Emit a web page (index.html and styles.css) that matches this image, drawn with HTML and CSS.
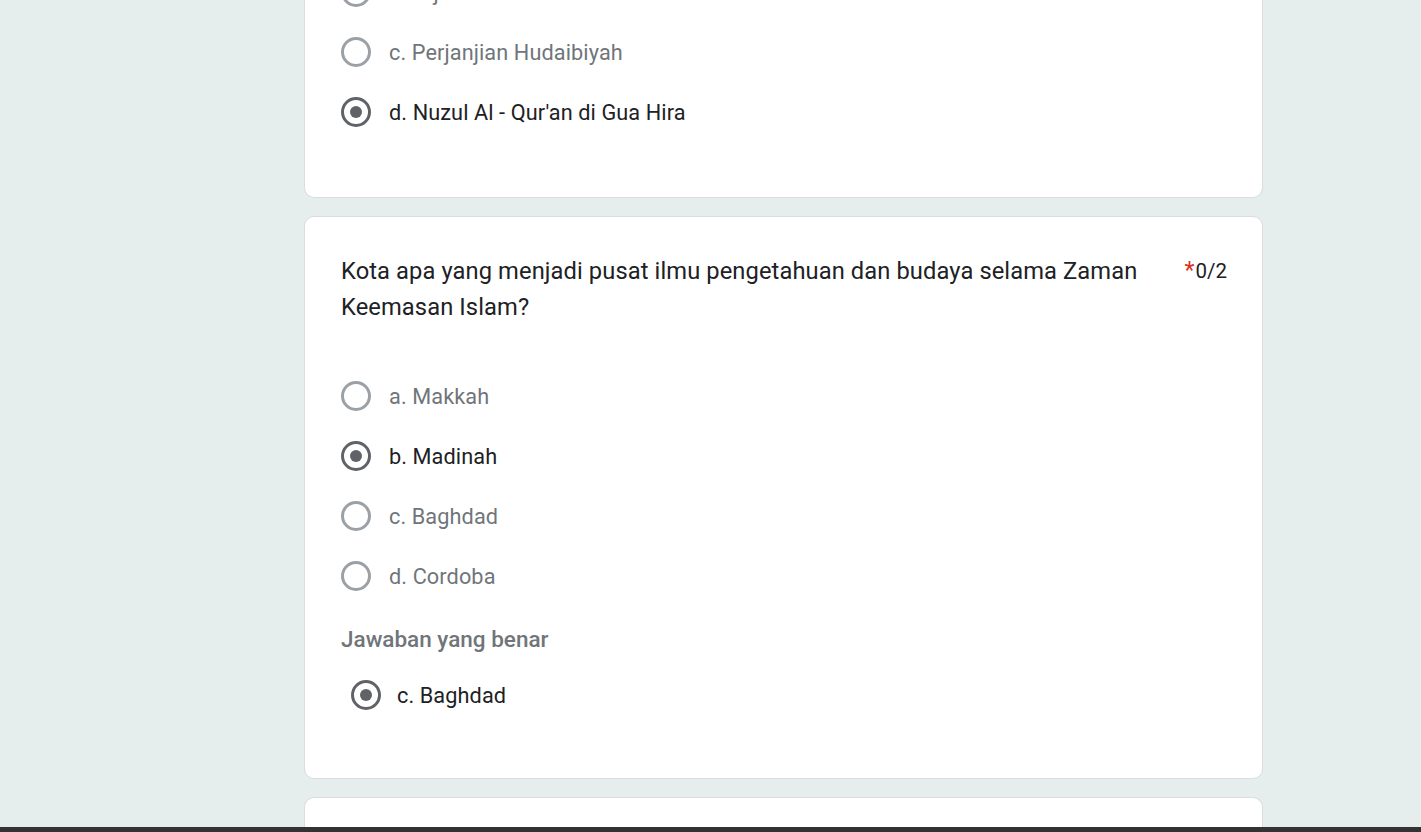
FILE: index.html
```html
<!DOCTYPE html>
<html>
<head>
<meta charset="utf-8">
<link rel="stylesheet" href="styles.css">
</head>
<body>
<div class="page">
  <main class="column">
    <section class="card card-first">
      <div class="options">
        <div class="option"><span class="radio"></span><span class="label">b. Hijrah</span></div>
        <div class="option"><span class="radio"></span><span class="label">c. Perjanjian Hudaibiyah</span></div>
        <div class="option selected"><span class="radio"></span><span class="label">d. Nuzul Al - Qur'an di Gua Hira</span></div>
      </div>
    </section>
    <section class="card card-q">
      <div class="q-head">
        <div class="q-title">Kota apa yang menjadi pusat ilmu pengetahuan dan budaya selama Zaman Keemasan Islam?</div>
        <div class="q-score"><span class="req">*</span>0/2</div>
      </div>
      <div class="options">
        <div class="option"><span class="radio"></span><span class="label">a. Makkah</span></div>
        <div class="option selected"><span class="radio"></span><span class="label">b. Madinah</span></div>
        <div class="option"><span class="radio"></span><span class="label">c. Baghdad</span></div>
        <div class="option"><span class="radio"></span><span class="label">d. Cordoba</span></div>
      </div>
      <div class="correct-title">Jawaban yang benar</div>
      <div class="correct">
        <div class="option selected"><span class="radio"></span><span class="label">c. Baghdad</span></div>
      </div>
    </section>
    <section class="card card-next"></section>
  </main>
</div>
<div class="bottom-bar"></div>
</body>
</html>
```

FILE: styles.css
```css
html, body {
  margin: 0;
  padding: 0;
  height: 100%;
  overflow: hidden;
}
body {
  background: #e5eeed;
  font-family: Roboto, "Noto Sans", sans-serif;
  position: relative;
}
.page {
  display: flex;
  justify-content: flex-start;
  padding-left: 304px;
  margin-top: -38px;
}
.column {
  width: 959px;
  display: flex;
  flex-direction: column;
  gap: 18px;
}
.card {
  background: #fff;
  border: 1px solid #dadce0;
  border-radius: 10px;
  box-sizing: border-box;
  padding: 0 35px 0 36px;
}
.card-first {
  padding-top: 0;
  padding-bottom: 55px;
  border-top: none;
  border-top-left-radius: 0;
  border-top-right-radius: 0;
}
.options {
  display: flex;
  flex-direction: column;
}
.option {
  display: flex;
  align-items: center;
  height: 60px;
}
.radio {
  width: 30px;
  height: 30px;
  box-sizing: border-box;
  border: 3px solid #9aa0a6;
  border-radius: 50%;
  display: flex;
  align-items: center;
  justify-content: center;
  flex: none;
}
.selected .radio {
  border-color: #5f6368;
}
.selected .radio::after {
  content: "";
  width: 12px;
  height: 12px;
  border-radius: 50%;
  background: #5f6368;
}
.label {
  margin-left: 18px;
  font-size: 21.7px;
  color: #70757a;
  letter-spacing: 0.1px;
}
.selected .label {
  color: #202124;
}
.card-q {
  padding-top: 36px;
  padding-bottom: 53px;
}
.q-head {
  display: flex;
  justify-content: space-between;
  align-items: flex-start;
  margin-bottom: 41px;
}
.q-title {
  width: 830px;
  font-size: 23.7px;
  line-height: 36px;
  color: #202124;
  letter-spacing: 0.1px;
}
.q-score {
  font-size: 20.5px;
  line-height: 36px;
  color: #202124;
  white-space: nowrap;
}
.req {
  color: #d93025;
  font-size: 23px;
  margin-right: 1px;
}
.correct-title {
  margin-top: 16px;
  font-size: 22.5px;
  font-weight: 500;
  color: #70757a;
  line-height: 34px;
}
.correct {
  padding-left: 10px;
  margin-top: 9px;
}
.correct .label {
  margin-left: 16px;
}
.card-next {
  height: 60px;
  border-bottom: none;
}
.bottom-bar {
  position: fixed;
  left: 0;
  right: 0;
  bottom: 0;
  height: 5px;
  background: #333333;
}
```
